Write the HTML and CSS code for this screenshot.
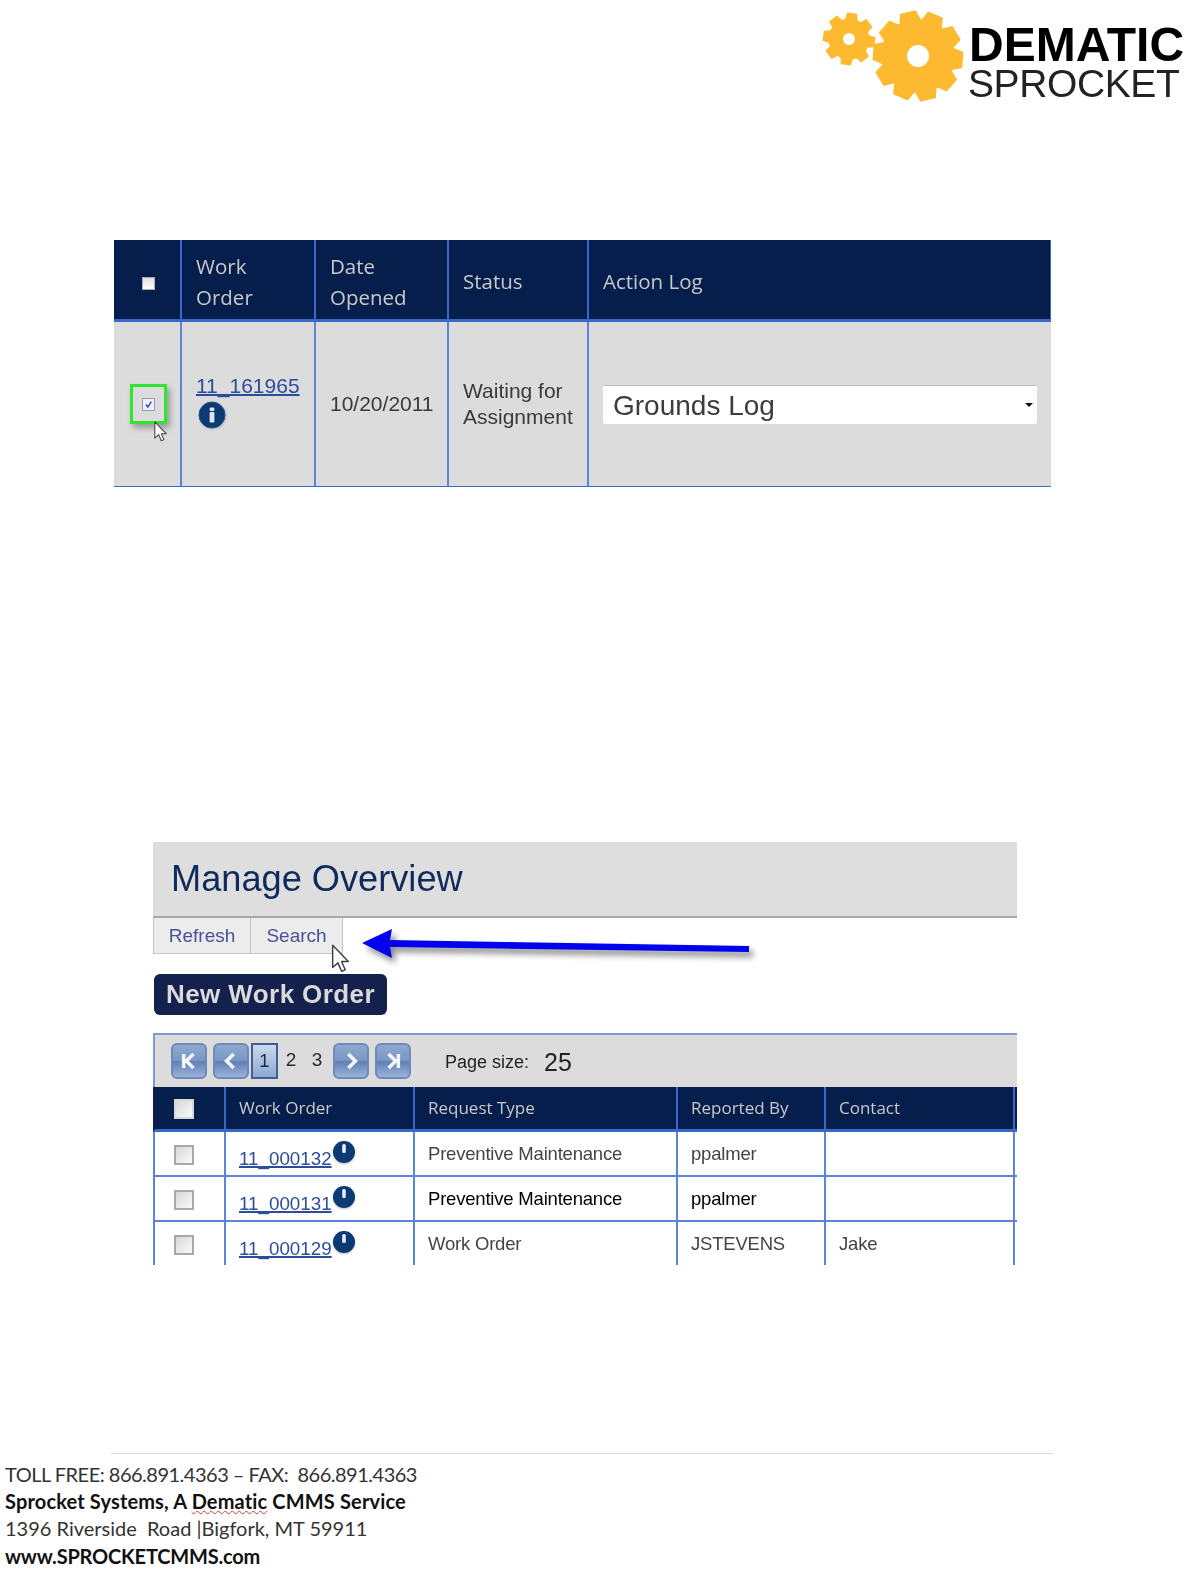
FILE: index.html
```html
<!DOCTYPE html>
<html lang="en">
<head>
<meta charset="utf-8">
<title>Dematic Sprocket</title>
<link rel="stylesheet" href="styles.css">
</head>
<body>
<svg class="defs" xmlns="http://www.w3.org/2000/svg">
  <symbol id="cursor" viewBox="0 0 15 24">
    <path d="M1 1V19.5L5.4 15.6L8.4 22.6L11.4 21.3L8.4 14.5H14Z" fill="#fff" stroke="#3c4048" stroke-width="1.2" stroke-linejoin="round"/>
  </symbol>
  <symbol id="info" viewBox="0 0 28 28">
    <circle cx="14" cy="14" r="13" fill="#0c3a73"/>
    <circle cx="14" cy="14" r="13" fill="none" stroke="#1b4f8e" stroke-width="1"/>
    <rect x="11.6" y="6.5" width="4.8" height="3.6" rx="1.4" fill="#dfe6f0"/>
    <rect x="11.6" y="11" width="4.8" height="10.5" rx="1" fill="#dfe6f0"/>
  </symbol>
  <symbol id="info-small" viewBox="0 0 24 24">
    <circle cx="12" cy="12" r="11" fill="#0c3a73"/>
    <rect x="10.2" y="4" width="3.6" height="9" rx="1.6" fill="#e8edf4"/>
  </symbol>
</svg>

<header class="brand">
  <svg class="gears" viewBox="0 0 146 96" xmlns="http://www.w3.org/2000/svg">
    <defs>
      <polygon id="big-tooth" points="-11,-35 -8,-45 8,-45 11,-35"/>
      <polygon id="small-tooth" points="-6.5,-18 -5,-26 5,-26 6.5,-18"/>
    </defs>
    <g class="gear" transform="translate(29 31)">
      <circle r="20.5"/>
      <use href="#small-tooth" transform="rotate(7)"/>
      <use href="#small-tooth" transform="rotate(52)"/>
      <use href="#small-tooth" transform="rotate(97)"/>
      <use href="#small-tooth" transform="rotate(142)"/>
      <use href="#small-tooth" transform="rotate(187)"/>
      <use href="#small-tooth" transform="rotate(232)"/>
      <use href="#small-tooth" transform="rotate(277)"/>
      <use href="#small-tooth" transform="rotate(322)"/>
      <circle class="gear-hole" r="6"/>
    </g>
    <g class="gear" transform="translate(98 48)">
      <circle r="37"/>
      <use href="#big-tooth" transform="rotate(-13)"/>
      <use href="#big-tooth" transform="rotate(23)"/>
      <use href="#big-tooth" transform="rotate(59)"/>
      <use href="#big-tooth" transform="rotate(95)"/>
      <use href="#big-tooth" transform="rotate(131)"/>
      <use href="#big-tooth" transform="rotate(167)"/>
      <use href="#big-tooth" transform="rotate(203)"/>
      <use href="#big-tooth" transform="rotate(239)"/>
      <use href="#big-tooth" transform="rotate(275)"/>
      <use href="#big-tooth" transform="rotate(311)"/>
      <circle class="gear-hole" r="11"/>
    </g>
  </svg>
  <div class="wordmark">
    <div class="word-top">DEMATIC</div>
    <div class="word-bottom">SPROCKET</div>
  </div>
</header>

<section class="shot-log">
  <table class="log-table">
    <colgroup>
      <col class="lc1"><col class="lc2"><col class="lc3"><col class="lc4"><col class="lc5">
    </colgroup>
    <thead>
      <tr>
        <th class="center"><span class="head-check"></span></th>
        <th>Work<br>Order</th>
        <th>Date<br>Opened</th>
        <th>Status</th>
        <th>Action Log</th>
      </tr>
    </thead>
    <tbody>
      <tr>
        <td class="center check-cell">
          <span class="green-box">
            <svg class="tick" viewBox="0 0 13 13" xmlns="http://www.w3.org/2000/svg"><path d="M3.5 6.5L5.8 9.5L9.8 3" fill="none" stroke="#1f3fd0" stroke-width="1.6"/></svg>
          </span>
          <svg class="cursor cursor-log"><use href="#cursor"/></svg>
        </td>
        <td>
          <a class="log-link" href="#">11_161965</a>
          <svg class="info-big"><use href="#info"/></svg>
        </td>
        <td class="date">10/20/2011</td>
        <td class="status">Waiting for<br>Assignment</td>
        <td class="action">
          <div class="select-box"><span>Grounds Log</span><i class="caret"></i></div>
        </td>
      </tr>
    </tbody>
  </table>
</section>

<section class="shot-manage">
  <h1 class="title">Manage Overview</h1>
  <nav class="toolbar">
    <a class="tool" href="#">Refresh</a>
    <a class="tool" href="#">Search</a>
  </nav>
  <svg class="cursor cursor-search"><use href="#cursor"/></svg>
  <svg class="arrow" viewBox="0 0 400 42" xmlns="http://www.w3.org/2000/svg">
    <polygon points="2,18 32,4 30,15 389,21 389,27 30,22 32,33" fill="#0202ee"/>
  </svg>
  <button class="new-order" type="button">New Work Order</button>

  <div class="pager">
    <span class="pg-btn"><svg viewBox="0 0 36 36" xmlns="http://www.w3.org/2000/svg"><path d="M12 10V26M23 10L15 18L23 26" /></svg></span>
    <span class="pg-btn"><svg viewBox="0 0 36 36" xmlns="http://www.w3.org/2000/svg"><path d="M21 10L13 18L21 26"/></svg></span>
    <span class="pg-current">1</span>
    <span class="pg-num">2</span>
    <span class="pg-num">3</span>
    <span class="pg-btn"><svg viewBox="0 0 36 36" xmlns="http://www.w3.org/2000/svg"><path d="M15 10L23 18L15 26"/></svg></span>
    <span class="pg-btn"><svg viewBox="0 0 36 36" xmlns="http://www.w3.org/2000/svg"><path d="M24 10V26M13 10L21 18L13 26"/></svg></span>
    <span class="pg-label">Page size:</span>
    <span class="pg-size">25</span>
  </div>

  <table class="grid">
    <colgroup>
      <col class="gc1"><col class="gc2"><col class="gc3"><col class="gc4"><col class="gc5"><col class="gc6">
    </colgroup>
    <thead>
      <tr>
        <th class="center"><span class="box box-head"></span></th>
        <th>Work Order</th>
        <th>Request Type</th>
        <th>Reported By</th>
        <th>Contact</th>
        <th></th>
      </tr>
    </thead>
    <tbody>
      <tr>
        <td class="center"><span class="box"></span></td>
        <td><div class="wo"><a href="#">11_000132</a><svg class="info-small"><use href="#info-small"/></svg></div></td>
        <td>Preventive Maintenance</td>
        <td>ppalmer</td>
        <td></td>
        <td></td>
      </tr>
      <tr class="hover">
        <td class="center"><span class="box"></span></td>
        <td><div class="wo"><a href="#">11_000131</a><svg class="info-small"><use href="#info-small"/></svg></div></td>
        <td>Preventive Maintenance</td>
        <td>ppalmer</td>
        <td></td>
        <td></td>
      </tr>
      <tr class="cut">
        <td class="center"><span class="box"></span></td>
        <td><div class="wo"><a href="#">11_000129</a><svg class="info-small"><use href="#info-small"/></svg></div></td>
        <td>Work Order</td>
        <td>JSTEVENS</td>
        <td>Jake</td>
        <td></td>
      </tr>
    </tbody>
  </table>
</section>

<footer class="foot">
  <hr class="foot-rule">
  <p class="phone">TOLL FREE: 866.891.4363 – FAX:&nbsp; 866.891.4363</p>
  <p class="strong company">Sprocket Systems, A <span class="spell">Dematic</span> CMMS Service</p>
  <p>1396 Riverside&nbsp; Road |Bigfork, MT 59911</p>
  <p class="strong site">www.SPROCKETCMMS.com</p>
</footer>
</body>
</html>
```

FILE: styles.css
```css
* { box-sizing: border-box; }

html, body { margin: 0; padding: 0; }

body {
  width: 1190px;
  height: 1581px;
  overflow: hidden;
  background: #fff;
  font-family: "Liberation Sans", Arial, sans-serif;
}

.defs { display: none; }

/* Brand */
.brand {
  height: 240px;
  display: flex;
  justify-content: flex-end;
  align-items: flex-start;
  padding: 8px 6px 0 0;
  filter: blur(0.4px);
}
.gears { width: 146px; height: 96px; margin-right: 3px; flex: none; }
.gear { fill: #fdb92f; }
.gear-hole { fill: #fff; }
.wordmark { color: #000; padding-top: 15px; width: 215px; }
.word-top { font-size: 48px; line-height: 44px; font-weight: 700; }
.word-bottom { font-size: 39px; line-height: 38px; margin: -2px 0 0 -1px; letter-spacing: -0.4px; color: #222; }

/* Top table */
.shot-log { margin-left: 114px; width: 937px; filter: blur(0.35px); }
.log-table { border-collapse: separate; border-spacing: 0; table-layout: fixed; width: 937px; }
.lc1 { width: 68px; } .lc2 { width: 134px; } .lc3 { width: 133px; } .lc4 { width: 140px; } .lc5 { width: 462px; }

.log-table th {
  height: 82px;
  background: #061e4b;
  color: #c9c9c9;
  font: 400 20.5px/31px "Open Sans", sans-serif;
  text-align: left;
  padding: 4px 0 0 14px;
  border-right: 2px solid #3a68c8;
  border-bottom: 3px solid #3a68c8;
}
.log-table th:last-child { border-right: 1px solid #3a68c8; }
.log-table th.center, .grid th.center { text-align: center; }
.log-table th.center { padding: 4px 0 0 2px; }
.grid th.center { padding: 0; }

.log-table td {
  height: 165px;
  background: #dcdcdc;
  color: #3a3a3a;
  font-size: 21px;
  line-height: 26px;
  padding: 0 0 0 14px;
  border-right: 2px solid #5a85dc;
  border-bottom: 1.5px solid #3a68c8;
}
.log-table td:last-child { border-right: 0; }
.log-table td.center, .grid td.center { padding: 0; text-align: center; }

.head-check {
  display: inline-block;
  width: 13px;
  height: 13px;
  vertical-align: middle;
  background: linear-gradient(#e0e0e0, #fff);
  border: 1px solid #aaa;
}
.check-cell { position: relative; }
.green-box {
  display: inline-flex;
  align-items: center;
  justify-content: center;
  width: 37px;
  height: 40px;
  border: 3px solid #2ee62e;
  box-shadow: 3px 4px 6px #9a9a9a;
  vertical-align: middle;
  margin-left: 2px;
}
.tick { width: 13px; height: 13px; background: #eef0f6; border: 1px solid #9a9aa8; }
.cursor { position: absolute; width: 15px; height: 21px; }
.cursor-log { left: 39px; top: 99px; }

.log-link { display: block; color: #2b4d9b; font-size: 21px; line-height: 24px; text-decoration: underline; text-decoration-thickness: 1.5px; width: 105px; margin-top: -5px; }
.info-big { display: block; width: 28px; height: 28px; margin: 3px 0 0 2px; filter: drop-shadow(1px 1px 1px #bbb); }
.date { white-space: nowrap; }
.status { white-space: nowrap; }

.select-box {
  display: flex;
  align-items: center;
  justify-content: space-between;
  width: 434px;
  height: 39px;
  background: #fff;
  border-top: 1px solid #bbb;
  border-radius: 2px;
  padding: 3px 4px 0 10px;
  color: #3c3c3c;
  font-size: 28px;
  line-height: 34px;
}
.caret { width: 0; height: 0; border: 4px solid transparent; border-top-color: #111; border-bottom: 0; margin-top: -2px; }

/* Manage overview */
.shot-manage {
  position: relative;
  margin: 355px 0 0 153px;
  width: 864px;
  filter: blur(0.35px);
}
.title {
  margin: 0;
  height: 76px;
  background: #dedede;
  border-bottom: 2px solid #a9a9a9;
  color: #0f2a5c;
  font-size: 36.2px;
  font-weight: 400;
  line-height: 74px;
  padding-left: 18px;
}
.toolbar { display: flex; height: 36px; }
.tool {
  display: flex;
  align-items: center;
  justify-content: center;
  height: 36px;
  width: 98px;
  background: #ececec;
  border: 1.5px solid #c6c6c6;
  border-top: 0;
  color: #4a5098;
  font-size: 19px;
  text-decoration: none;
}
.tool + .tool { width: 92px; border-left: 0; }
.cursor-search { width: 19px; height: 29px; left: 178px; top: 102px; }
.arrow {
  position: absolute;
  left: 207px;
  top: 83px;
  width: 400px;
  height: 42px;
  overflow: visible;
  filter: drop-shadow(4px 5px 3px #8a8a8a);
}
.new-order {
  display: block;
  margin: 20px 0 18px 1px;
  width: 233px;
  height: 41px;
  padding: 0;
  background: #15214d;
  border: 0;
  border-radius: 6px;
  color: #dadada;
  font: 700 26px/41px "Liberation Sans", sans-serif;
  letter-spacing: 0.4px;
}

.pager {
  display: flex;
  align-items: center;
  height: 54px;
  background: #dcdcdc;
  border-top: 2px solid #7d9ad6;
  border-left: 2px solid #7d9ad6;
  padding: 0 0 0 16px;
}
.pg-btn {
  display: flex;
  width: 36px;
  height: 36px;
  margin-right: 6px;
  border: 2px solid #6d8ab8;
  border-radius: 6px;
  background: linear-gradient(#8ea8d0 0%, #7a97c5 48%, #5f80b6 52%, #9cb3d8 100%);
}
.pg-btn svg { width: 32px; height: 32px; }
.pg-btn path { fill: none; stroke: #f2f5fa; stroke-width: 4; }
.pg-current {
  display: flex;
  align-items: center;
  justify-content: center;
  width: 27px;
  height: 36px;
  margin-left: -4px;
  background: linear-gradient(#cbd7ec, #8fa9d4);
  border: 2px solid #3f5f95;
  font-size: 18.5px;
  color: #1c2a44;
}
.pg-num { width: 26px; text-align: center; font-size: 19px; color: #2b2b2b; margin-top: -3px; }
.pg-num + .pg-btn { margin-left: 3px; }
.pg-label { margin: 2px 0 0 28px; font-size: 18px; color: #222; }
.pg-size { margin: 2px 0 0 15px; font-size: 25px; color: #222; }

.grid { border-collapse: separate; border-spacing: 0; table-layout: fixed; width: 864px; }
.gc1 { width: 73px; } .gc2 { width: 189px; } .gc3 { width: 263px; } .gc4 { width: 148px; } .gc5 { width: 189px; } .gc6 { width: 2px; }

.grid th {
  height: 45px;
  background: #061e4b;
  color: #c9c9c9;
  font: 400 17px/22px "Open Sans", sans-serif;
  text-align: left;
  padding: 0 0 0 13px;
  border-right: 2px solid #3a68c8;
  border-bottom: 3px solid #3a68c8;
}
.grid th:last-child { border-right: 0; padding: 0; }

.grid td {
  height: 45px;
  padding: 0 0 0 13px;
  background: #fff;
  color: #444;
  font-size: 18.5px;
  letter-spacing: -0.2px;
  line-height: 22px;
  border-right: 2px solid #5a85dc;
  border-bottom: 2px solid #5a85dc;
}
.grid td:first-child { border-left: 2px solid #5a85dc; }
.grid th:first-child { border-left: 2px solid #061e4b; }
.grid td:last-child { border-right: 0; padding: 0; }
.grid .hover td { color: #000; }
.grid .cut td { height: 43px; border-bottom: 0; }

.box {
  display: inline-block;
  width: 20px;
  height: 20px;
  vertical-align: middle;
  background: linear-gradient(135deg, #d8d8d8, #fafafa);
  border: 2px solid #a8a8a8;
  margin-right: 12px;
}
.box-head { border-color: #d8d8d8; }

.wo { display: flex; align-items: flex-start; height: 26px; }
.wo a { color: #2b4d9b; margin-top: 7px; font-size: 18.8px; letter-spacing: 0; line-height: 21px; text-decoration: underline; text-decoration-thickness: 1.5px; }
.info-small { width: 24px; height: 24px; margin-top: -1px; flex: none; filter: drop-shadow(0 1px 1px #bbb); }

/* Footer */
.foot { margin-top: 188px; padding-left: 5px; font-family: Lato, "Open Sans", sans-serif; color: #333; font-size: 20px; }
.foot-rule { margin: 0 0 7px 106px; width: 942px; height: 1px; border: 0; background: #d9d9d9; }
.foot p { margin: 0; line-height: 27.2px; white-space: nowrap; }
.foot .strong { font-weight: 700; color: #111; }
.foot .phone { letter-spacing: -0.5px; }
.foot .company { letter-spacing: 0.15px; }
.foot .site { letter-spacing: -0.2px; }
.spell { text-decoration: underline wavy #d04040 1px; text-underline-offset: 1px; }
```
